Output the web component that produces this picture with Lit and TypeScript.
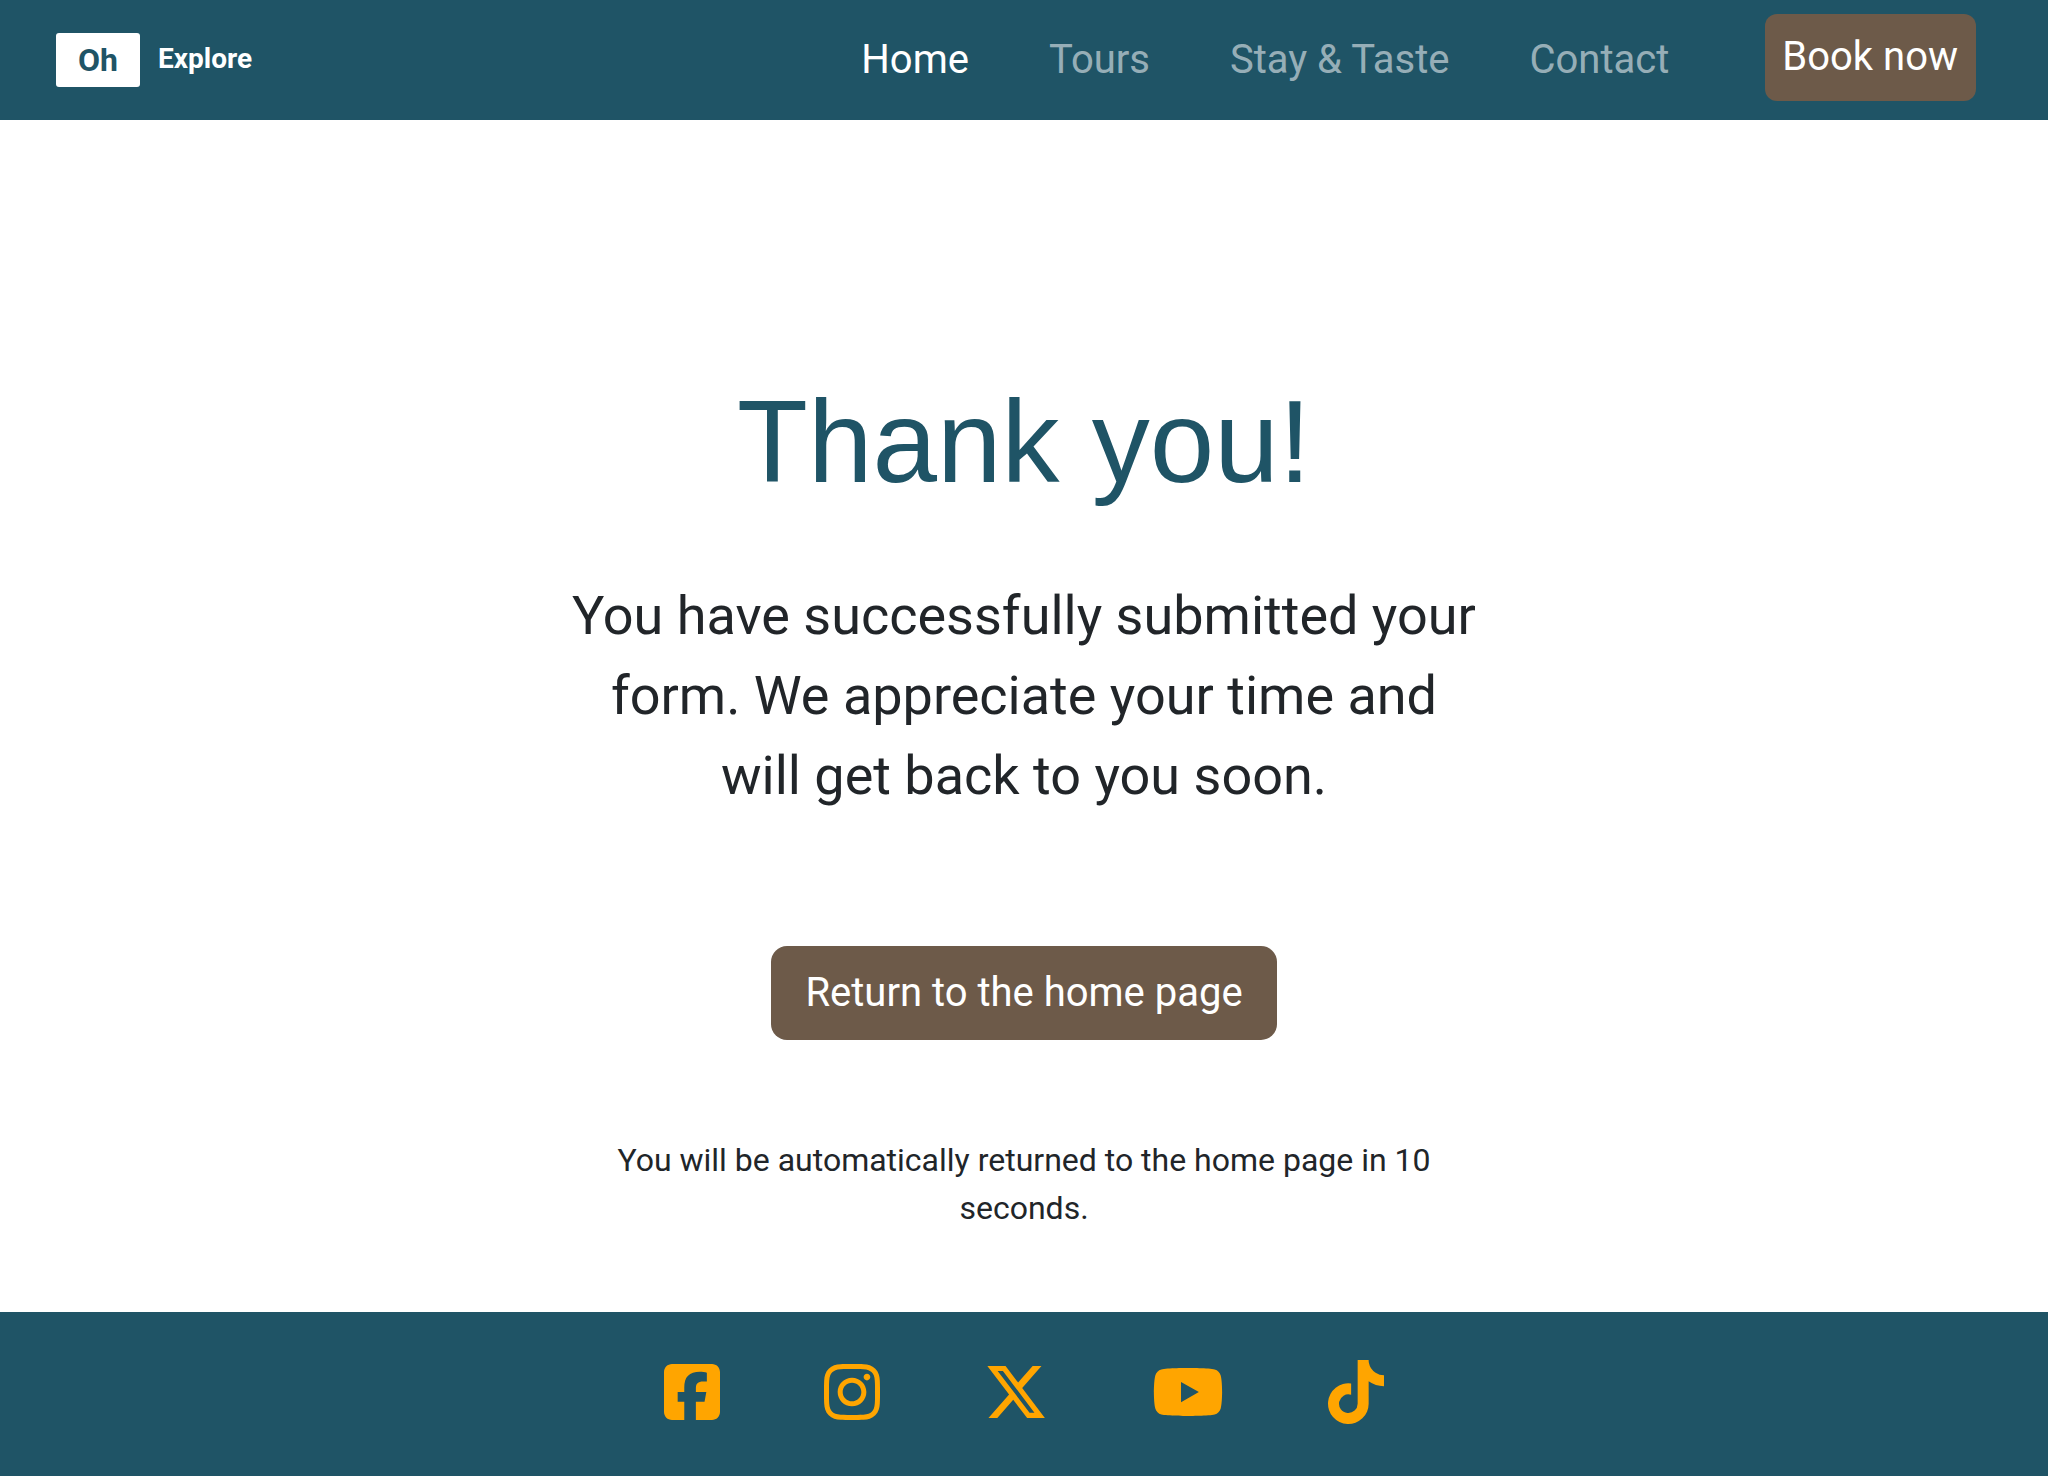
import { LitElement, html, css, svg } from "lit";
import { customElement } from "lit/decorators.js";

interface SocialLink {
  name: string;
  width: number;
  path: string;
}

const SOCIAL_LINKS: SocialLink[] = [
  {
    name: "Facebook",
    width: 448,
    path: "M64 32C28.7 32 0 60.7 0 96V416c0 35.3 28.7 64 64 64h98.2V334.2H109.4V256h52.8V222.3c0-87.1 39.4-127.5 125-127.5c16.2 0 44.2 3.2 55.7 6.4V172c-6-.6-16.5-1-29.6-1c-42 0-58.2 15.9-58.2 57.2V256h83.6l-14.4 78.2H255V480H384c35.3 0 64-28.7 64-64V96c0-35.3-28.7-64-64-64H64z",
  },
  {
    name: "Instagram",
    width: 448,
    path: "M224.1 141c-63.6 0-114.9 51.3-114.9 114.9s51.3 114.9 114.9 114.9S339 319.5 339 255.9 287.7 141 224.1 141zm0 189.6c-41.1 0-74.7-33.5-74.7-74.7s33.5-74.7 74.7-74.7 74.7 33.5 74.7 74.7-33.6 74.7-74.7 74.7zm146.4-194.3c0 14.9-12 26.8-26.8 26.8-14.9 0-26.8-12-26.8-26.8s12-26.8 26.8-26.8 26.8 12 26.8 26.8zm76.1 27.2c-1.7-35.9-9.9-67.7-36.2-93.9-26.2-26.2-58-34.4-93.9-36.2-37-2.1-147.9-2.1-184.9 0-35.8 1.7-67.6 9.9-93.9 36.1s-34.4 58-36.2 93.9c-2.1 37-2.1 147.9 0 184.9 1.7 35.9 9.9 67.7 36.2 93.9s58 34.4 93.9 36.2c37 2.1 147.9 2.1 184.9 0 35.9-1.7 67.7-9.9 93.9-36.2 26.2-26.2 34.4-58 36.2-93.9 2.1-37 2.1-147.8 0-184.8zM398.8 388c-7.8 19.6-22.9 34.7-42.6 42.6-29.5 11.7-99.5 9-132.1 9s-102.7 2.6-132.1-9c-19.6-7.8-34.7-22.9-42.6-42.6-11.7-29.5-9-99.5-9-132.1s-2.6-102.7 9-132.1c7.8-19.6 22.9-34.7 42.6-42.6 29.5-11.7 99.5-9 132.1-9s102.7-2.6 132.1 9c19.6 7.8 34.7 22.9 42.6 42.6 11.7 29.5 9 99.5 9 132.1s2.7 102.7-9 132.1z",
  },
  {
    name: "X",
    width: 512,
    path: "M389.2 48h70.6L305.6 224.2 487 464H345L233.7 318.6 106.5 464H35.8L200.7 275.5 26.8 48H172.4L272.9 180.9 389.2 48zM364.4 421.8h39.1L151.1 88h-42L364.4 421.8z",
  },
  {
    name: "YouTube",
    width: 576,
    path: "M549.655 124.083c-6.281-23.65-24.787-42.276-48.284-48.597C458.781 64 288 64 288 64S117.22 64 74.629 75.486c-23.497 6.322-42.003 24.947-48.284 48.597-11.412 42.867-11.412 132.305-11.412 132.305s0 89.438 11.412 132.305c6.281 23.65 24.787 41.5 48.284 47.821C117.22 448 288 448 288 448s170.78 0 213.371-11.486c23.497-6.321 42.003-24.171 48.284-47.821 11.412-42.867 11.412-132.305 11.412-132.305s0-89.438-11.412-132.305zm-317.51 213.508V175.185l142.739 81.205-142.739 81.201z",
  },
  {
    name: "TikTok",
    width: 448,
    path: "M448,209.91a210.06,210.06,0,0,1-122.77-39.25V349.38A162.55,162.55,0,1,1,185,188.31V278.2a74.62,74.62,0,1,0,52.23,71.18V0l88,0a121.18,121.18,0,0,0,1.86,22.17h0A122.18,122.18,0,0,0,381,102.39a121.43,121.43,0,0,0,67,20.14Z",
  },
];

@customElement("site-header")
export class SiteHeader extends LitElement {
  static styles = css`
    :host {
      display: block;
      background: #1f5466;
      color: #fff;
    }
    a {
      color: inherit;
      text-decoration: none;
    }
    .bar {
      box-sizing: border-box;
      min-height: 120px;
      padding: 0 72px 0 56px;
      display: flex;
      align-items: center;
      justify-content: space-between;
    }
    .brand {
      display: flex;
      align-items: center;
      gap: 18px;
      font-weight: 700;
    }
    .mark {
      padding: 0 22px;
      border-radius: 3px;
      background: #fff;
      color: #1f5466;
      font-size: 32px;
      line-height: 54px;
    }
    .name {
      padding-bottom: 2px;
      font-size: 28px;
      line-height: 52px;
    }
    .menu {
      display: flex;
      align-items: flex-start;
      gap: 80px;
      font-size: 40px;
      line-height: 60px;
    }
    .link {
      padding-top: 16px;
      color: rgba(255, 255, 255, 0.55);
    }
    .link.active {
      color: #fff;
    }
    .book {
      margin: 0 0 6px 16px;
      padding: 13px 18px 14px 17px;
      border-radius: 12px;
      background: #6d5a49;
    }
  `;

  render() {
    return html`
      <header class="bar">
        <a class="brand" href="#home">
          <span class="mark">Oh</span>
          <span class="name">Explore</span>
        </a>
        <nav class="menu">
          <a class="link active" href="#home">Home</a>
          <a class="link" href="#tours">Tours</a>
          <a class="link" href="#stay">Stay &amp; Taste</a>
          <a class="link" href="#contact">Contact</a>
          <a class="book" href="#book">Book now</a>
        </nav>
      </header>
    `;
  }
}

@customElement("site-footer")
export class SiteFooter extends LitElement {
  static styles = css`
    :host {
      display: block;
      background: #1f5466;
    }
    .socials {
      display: flex;
      justify-content: center;
      gap: 104px;
      padding: 48px 0 52px;
    }
    .social {
      display: flex;
      color: #ffa500;
    }
    .icon {
      display: block;
      height: 64px;
      fill: currentColor;
    }
  `;

  render() {
    return html`
      <footer class="socials">
        ${SOCIAL_LINKS.map(
          (link) => html`
            <a class="social" href="#${link.name.toLowerCase()}" aria-label=${link.name}>
              <svg class="icon" viewBox="0 0 ${link.width} 512" aria-hidden="true">
                ${svg`<path d=${link.path}></path>`}
              </svg>
            </a>
          `
        )}
      </footer>
    `;
  }
}

@customElement("app-root")
export class AppRoot extends LitElement {
  static styles = css`
    :host {
      display: flex;
      flex-direction: column;
      min-height: 100vh;
      background: #fff;
      color: #212529;
      font-family: Roboto, "Liberation Sans", sans-serif;
    }
    .content {
      flex: 1;
      display: flex;
      flex-direction: column;
      align-items: center;
      padding: 250px 24px 68px;
      text-align: center;
    }
    .title {
      margin: 0;
      color: #1f5466;
      font: 400 116px/144px "Liberation Sans", Arial, sans-serif;
    }
    .message {
      max-width: 912px;
      margin: 62px 0 0;
      font-size: 54px;
      line-height: 80px;
    }
    .home {
      margin-top: 130px;
      padding: 17px 34px;
      border-radius: 16px;
      background: #6d5a49;
      color: #fff;
      font-size: 40px;
      line-height: 60px;
      text-decoration: none;
    }
    .notice {
      max-width: 864px;
      margin: 96px 0 0;
      font-size: 32px;
      line-height: 48px;
    }
  `;

  render() {
    return html`
      <site-header></site-header>
      <main class="content">
        <h1 class="title">Thank you!</h1>
        <p class="message">
          You have successfully submitted your form. We appreciate your time and will get back to you soon.
        </p>
        <a class="home" href="#home">Return to the home page</a>
        <p class="notice">You will be automatically returned to the home page in 10 seconds.</p>
      </main>
      <site-footer></site-footer>
    `;
  }
}
